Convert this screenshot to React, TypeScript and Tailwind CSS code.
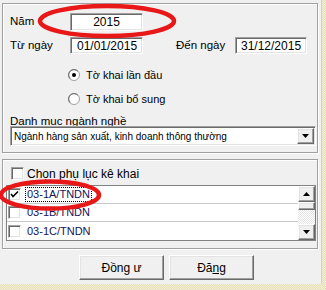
import React from "react";

const sunken =
  "bg-white border border-t-[#a0a0a0] border-l-[#a0a0a0] border-r-white border-b-white shadow-[inset_1px_1px_0_#696969,inset_-1px_-1px_0_#e3e3e3]";
const raised =
  "bg-[#f0f0f0] border border-t-white border-l-white border-r-[#696969] border-b-[#696969] shadow-[inset_-1px_-1px_0_#a0a0a0,inset_1px_1px_0_#e3e3e3]";
const group =
  "border border-[#a0a0a0] shadow-[inset_1px_1px_0_#ffffff,1px_1px_0_#ffffff]";
const strip =
  "bg-[repeating-conic-gradient(#e6dfb6_0_25%,#f3efd8_0_50%)] bg-[length:2px_2px]";

function Radio({ checked }: { checked?: boolean }) {
  return (
    <svg width="12" height="12" viewBox="0 0 12 12" className="shrink-0">
      <circle cx="6" cy="6" r="5.5" fill="#ffffff" stroke="#a0a0a0" />
      <path d="M2.2 9.8 A5 5 0 0 1 9.8 2.2" fill="none" stroke="#696969" strokeWidth="1" />
      {checked && <circle cx="6" cy="6" r="2" fill="#000000" />}
    </svg>
  );
}

function Check({ checked }: { checked?: boolean }) {
  return (
    <div className={`w-[13px] h-[13px] shrink-0 flex items-center justify-center ${sunken}`}>
      {checked && (
        <svg width="9" height="9" viewBox="0 0 9 9">
          <path d="M1 4 L3 6.5 L8 1.5" fill="none" stroke="#000" strokeWidth="1.6" />
        </svg>
      )}
    </div>
  );
}

function Row({ label, checked, focus, last }: { label: string; checked?: boolean; focus?: boolean; last?: boolean }) {
  return (
    <div className={`h-[18px] flex items-center pl-[1px] ${last ? "" : "border-b border-[#c8c8c8]"}`}>
      <Check checked={checked} />
      <span
        className={`ml-[5px] px-[1px] leading-[13px] text-[#14145a] ${focus ? "outline outline-1 outline-dotted outline-[#000]" : ""}`}
      >
        {label}
      </span>
    </div>
  );
}

export default function App() {
  return (
    <div className="w-[326px] h-[290px] bg-[#f0f0f0] flex flex-col relative overflow-hidden font-['Liberation_Sans',Arial,sans-serif] text-[11px] text-black">
      <div className="flex flex-1">
        <div className="w-[322px] pl-[2px] pt-[3px] flex flex-col border-r border-[#d0d0d0]">
          {/* Group 1 */}
          <div className={`w-[316px] h-[150px] ${group} pl-[7px] flex flex-col`}>
            <div className="mt-[9px] flex items-center h-[18px]">
              <span className="w-[60px] text-[11.5px]">Năm</span>
              <div className={`w-[73px] h-[18px] ${sunken} flex items-center justify-center text-[12px]`}>2015</div>
            </div>
            <div className="mt-[6px] flex items-center h-[17px]">
              <span className="w-[60px] text-[11.5px]">Từ ngày</span>
              <div className={`w-[73px] h-[17px] ${sunken} flex items-center pl-[6px] text-[12px]`}>01/01/2015</div>
              <span className="ml-[33px] w-[59px] text-[11.5px]">Đến ngày</span>
              <div className={`w-[72px] h-[17px] ${sunken} flex items-center pl-[5px] text-[12px]`}>31/12/2015</div>
            </div>
            <div className="mt-[14px] ml-[58px] flex items-center h-[14px] gap-[6px]">
              <Radio checked />
              <span>Tờ khai lần đầu</span>
            </div>
            <div className="mt-[10px] ml-[58px] flex items-center h-[14px] gap-[6px]">
              <Radio />
              <span>Tờ khai bổ sung</span>
            </div>
            <div className="mt-[9px] h-[12px] leading-[12px] text-[11.5px]">Danh mục ngành nghề</div>
            <div className={`mt-[-1px] w-[306px] h-[20px] ${sunken} flex items-center pl-[3px] pr-[1px]`}>
              <span className="flex-1 text-[10px]">Ngành hàng sản xuất, kinh doanh thông thường</span>
              <div className={`w-[17px] h-[16px] ${raised} flex items-center justify-center`}>
                <svg width="7" height="4" viewBox="0 0 7 4">
                  <path d="M0 0 H7 L3.5 4 Z" fill="#000" />
                </svg>
              </div>
            </div>
          </div>

          {/* Group 2 */}
          <div className={`mt-[6px] w-[316px] h-[90px] ${group} pl-[3px] flex flex-col`}>
            <div className="mt-[7px] ml-[5px] flex items-center h-[13px] gap-[3px]">
              <Check />
              <span className="text-[12px]">Chọn phụ lục kê khai</span>
            </div>
            <div className="mt-[5px] w-[310px] h-[56px] bg-white border border-[#828282] flex">
              <div className="flex-1 flex flex-col">
                <Row label="03-1A/TNDN" checked focus />
                <Row label="03-1B/TNDN" />
                <Row label="03-1C/TNDN" last />
              </div>
              <div className="w-[17px] flex flex-col">
                <div className={`h-[16px] ${raised} flex items-center justify-center`}>
                  <svg width="7" height="4" viewBox="0 0 7 4">
                    <path d="M0 4 H7 L3.5 0 Z" fill="#000" />
                  </svg>
                </div>
                <div className={`h-[8px] ${raised}`} />
                <div className={`flex-1 bg-[repeating-conic-gradient(#ffffff_0_25%,#e4e4e4_0_50%)] bg-[length:2px_2px]`} />
                <div className={`h-[16px] ${raised} flex items-center justify-center`}>
                  <svg width="7" height="4" viewBox="0 0 7 4">
                    <path d="M0 0 H7 L3.5 4 Z" fill="#000" />
                  </svg>
                </div>
              </div>
            </div>
          </div>

          {/* Buttons */}
          <div className="mt-[6px] ml-[77px] flex gap-[5px]">
            <button className={`w-[85px] h-[25px] ${raised} text-[12px]`}>Đồng ư</button>
            <button className={`w-[85px] h-[25px] ${raised} text-[12px]`}>
              Đă<span className="underline">ng</span>
            </button>
          </div>
        </div>
        <div className={`w-[4px] ${strip}`} />
      </div>
      <div className={`h-[6px] ${strip}`} />

      <svg className="absolute left-0 top-0 pointer-events-none" width="326" height="290">
        <ellipse cx="107" cy="21" rx="67" ry="15" fill="none" stroke="#e81818" strokeWidth="4.5" />
        <ellipse cx="50" cy="195" rx="49" ry="13.5" fill="none" stroke="#e81818" strokeWidth="4.5" />
      </svg>
    </div>
  );
}
